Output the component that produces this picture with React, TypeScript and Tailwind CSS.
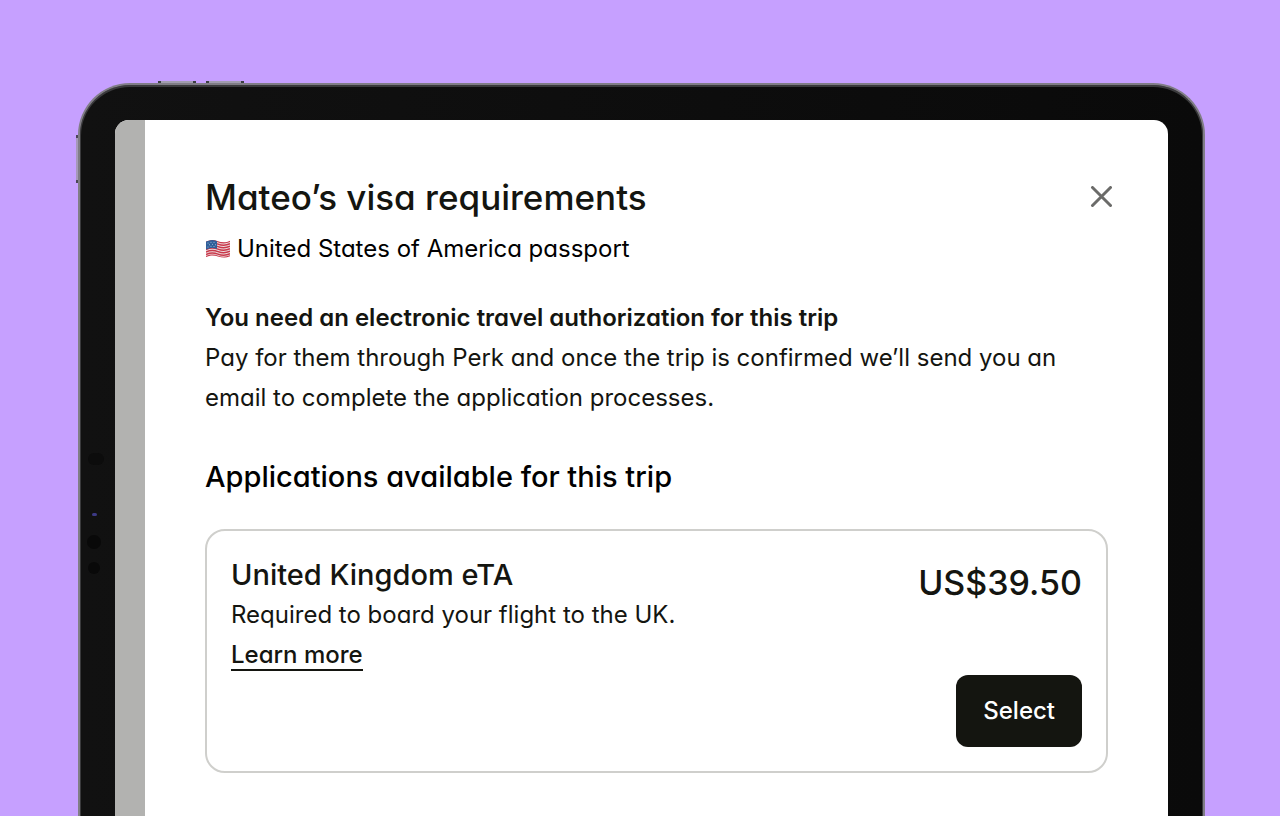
import React from "react";

const FlagIcon = () => {
  return (
    <svg viewBox="0 0 26 20" className="w-[26px] h-5 shrink-0" role="img" aria-label="Flag of the United States">
      <defs>
        <clipPath id="flag">
          <path d="M1 2.600C5 .6 9 .6 13 2.200s8 1.600 12-.4v15.400c-4 2-8 1.600-12 .2S5 16 1 18z" />
        </clipPath>
      </defs>
      <g clipPath="url(#flag)">
        <rect width="26" height="20" fill="#ecdcdf" />
        <g fill="none" stroke="#c9384a" strokeWidth="1.4">
          <path d="M1 3C5 1 9 1 13 2.600s8 1.600 12-.4" />
          <path d="M1 5.500C5 3.500 9 3.500 13 5.100s8 1.600 12-.4" />
          <path d="M1 8C5 6 9 6 13 7.600s8 1.600 12-.4" />
          <path d="M1 10.500C5 8.500 9 8.500 13 10.100s8 1.600 12-.4" />
          <path d="M1 13C5 11 9 11 13 12.600s8 1.600 12-.4" />
          <path d="M1 15.500C5 13.500 9 13.500 13 15.100s8 1.600 12-.4" />
          <path d="M1 17.800C5 15.800 9 15.800 13 17.400s8 1.600 12-.4" />
        </g>
        <path d="M1 2.600C5 .6 8 .7 12 1.800v8C8 8.600 5 8.600 1 10.600z" fill="#2f5f9a" />
        <g fill="#b9cbe0">
          <circle cx="3" cy="4" r=".5" />
          <circle cx="6" cy="3.200" r=".5" />
          <circle cx="9" cy="3.300" r=".5" />
          <circle cx="4.500" cy="5.700" r=".5" />
          <circle cx="7.500" cy="5.300" r=".5" />
          <circle cx="10.500" cy="5.700" r=".5" />
          <circle cx="3" cy="8" r=".5" />
          <circle cx="6" cy="7.300" r=".5" />
          <circle cx="9" cy="7.400" r=".5" />
        </g>
      </g>
    </svg>
  );
};

const CloseIcon = () => {
  return (
    <svg viewBox="0 0 22 22" className="w-[22px] h-[22px]" fill="none" stroke="#6b6b69" strokeWidth="3" strokeLinecap="round" aria-hidden="true">
      <path d="M2.500 1.500l18 18M20.500 1.500l-18 18" />
    </svg>
  );
};

// Side keys, camera and sensors that sit on the edge of the tablet
const DeviceDetails = () => {
  return (
    <div aria-hidden="true">
      <div className="absolute -top-1 left-[78px] h-[2px] w-[38px] border-x-3 border-[#3c3f42] bg-[#a29db0]" />
      <div className="absolute -top-1 left-[126px] h-[2px] w-[38px] border-x-3 border-[#3c3f42] bg-[#a29db0]" />
      <div className="absolute -left-1 top-[50px] h-[48px] w-[2px] border-y-3 border-[#4b4657] bg-[#a598b8]" />
      <div className="absolute left-2 top-[368px] h-3 w-4 rounded-full bg-[#0c0c0c]" />
      <div className="absolute left-3 top-[428px] h-[3px] w-[5px] rounded-full bg-[#3d3a85]" />
      <div className="absolute left-[7px] top-[450px] h-[14px] w-[14px] rounded-full bg-[#090909]" />
      <div className="absolute left-2 top-[477px] h-3 w-3 rounded-full bg-[#090909]" />
    </div>
  );
};

const VisaCard = () => {
  return (
    <div className="mt-8 flex justify-between rounded-[20px] border-2 border-[#cfcfcc] p-6">
      <div>
        <h3 className="text-[29px] leading-10 font-medium">United Kingdom eTA</h3>
        <p className="text-2xl leading-10">Required to board your flight to the UK.</p>
        <a href="#" className="mt-1.5 inline-block border-b-2 border-[#141510] text-2xl leading-7 font-medium">
          Learn more
        </a>
      </div>
      <div className="flex flex-col items-end">
        <p className="text-[34px] leading-14 font-medium">US$39.50</p>
        <button type="button" className="mt-16 rounded-xl bg-[#141510] px-[27px] py-4 text-2xl leading-10 font-medium text-white">
          Select
        </button>
      </div>
    </div>
  );
};

const App = () => {
  return (
    <div className="flex min-h-screen flex-col bg-[#c6a0ff] pt-[83px] pr-[75px] pl-[78px] font-['Inter','Liberation_Sans',sans-serif] [font-feature-settings:'cv11'] text-[#141510]">
      <div className="relative flex flex-1 flex-col rounded-t-[52px] border-2 border-b-0 border-[#807d86] bg-linear-to-r from-[#111111] to-[#0a0a0a] px-[35px] pt-[35px] shadow-[inset_0_1px_0_1px_#3a3a3c]">
        <DeviceDetails />
        <div className="flex flex-1 overflow-hidden rounded-t-[14px] bg-white">
          <div className="w-[30px] shrink-0 bg-[#b2b2b0]" />
          <main className="flex-1 pt-[53px] pr-[60px] pl-[60px]">
            <div className="-mr-1 flex items-center justify-between">
              <h1 className="text-[35px] leading-12 font-medium">Mateo’s visa requirements</h1>
              <button type="button" aria-label="Close">
                <CloseIcon />
              </button>
            </div>
            <p className="mt-2 flex items-center gap-1.5 text-2xl leading-10 text-black">
              <FlagIcon />
              United States of America passport
            </p>
            <section className="mt-[29px] text-2xl leading-10">
              <h2 className="font-semibold">You need an electronic travel authorization for this trip</h2>
              <p>
                Pay for them through Perk and once the trip is confirmed we’ll send you an email to complete the
                application processes.
              </p>
            </section>
            <h2 className="mt-[39px] text-[29px] leading-10 font-medium text-black">Applications available for this trip</h2>
            <VisaCard />
          </main>
        </div>
      </div>
    </div>
  );
};

export default App;
